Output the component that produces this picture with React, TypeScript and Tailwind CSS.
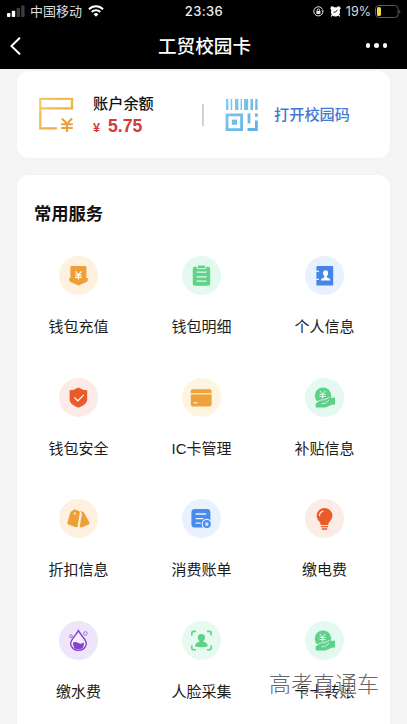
import React from "react";

type Service = {
  label: string;
  bg: string;
  icon: React.ReactNode;
};

function Yen({ x, y, s = 1, color = "#fff", w = 1.2 }: { x: number; y: number; s?: number; color?: string; w?: number }) {
  return (
    <path
      transform={`translate(${x} ${y}) scale(${s})`}
      d="M-3 -4L0 -0.6L3 -4M0 -0.6V4.2M-3.2 -0.2H3.2M-3.2 2H3.2"
      fill="none"
      stroke={color}
      strokeWidth={w}
    />
  );
}

function HandCoin() {
  return (
    <>
      <circle cx="18" cy="17.6" r="8.2" fill="#5fd08a" />
      <Yen x={17.6} y={16.6} s={0.95} w={1} color="#e4f9ef" />
      <path
        d="M10.7 25.2L14 23.4C15.8 22.4 17.5 22.6 19 22.4L24.5 20L30 19.6V26.4L26.8 26.8L20.5 29.4L10.7 29.6Z"
        fill="#5fd08a"
      />
      <path d="M10.7 24.6L14 22.8C15.8 21.8 17.5 22 19 21.8L24.5 19.4" fill="none" stroke="#e4f9ef" strokeWidth=".8" />
      <path d="M16.5 25.8L20.4 25.2L24 22.2" fill="none" stroke="#e4f9ef" strokeWidth=".8" />
    </>
  );
}

const services: Service[] = [
  {
    label: "钱包充值",
    bg: "bg-[#fef1e0]",
    icon: (
      <>
        <path
          d="M12.6 10H26.2Q27.4 10 27.4 11.2V22L29 22.6L28.4 25.4L19.5 29.6L10.6 25.4L10 22.6L11.4 22V11.2Q11.4 10 12.6 10Z"
          fill="#ee9f38"
        />
        <Yen x={19.4} y={19.4} />
      </>
    ),
  },
  {
    label: "钱包明细",
    bg: "bg-[#e4f9ef]",
    icon: (
      <>
        <rect x="10.8" y="10.8" width="17.4" height="19" rx="2.2" fill="#5fd488" />
        <path d="M16 9.6H23V12.2H16Z" fill="#5fd488" />
        <path d="M15.2 10.2V12.6H23.8V10.2" fill="none" stroke="#e4f9ef" strokeWidth=".9" />
        <path d="M14.6 16.2H24.6M14.6 20.8H24.6M14.6 25.2H24.6" stroke="#e4f9ef" strokeWidth="1.2" />
      </>
    ),
  },
  {
    label: "个人信息",
    bg: "bg-[#e8f2fe]",
    icon: (
      <>
        <rect x="11.4" y="10" width="16.8" height="19.6" rx="1.2" fill="#4585e6" />
        <path d="M10.4 15.4H14M10.4 23.4H14" stroke="#e8f2fe" strokeWidth="1.3" />
        <ellipse cx="20.6" cy="17.2" rx="2.5" ry="2.9" fill="#fff" />
        <path d="M15.8 24.4Q16 22 19.4 21.4V19H21.8V21.4Q25.2 22 25.4 24.4Z" fill="#fff" />
      </>
    ),
  },
  {
    label: "钱包安全",
    bg: "bg-[#fcebe7]",
    icon: (
      <>
        <path
          d="M19.4 9.4Q23.5 12 28.2 12.2V22Q28 26.4 19.4 29.8Q10.8 26.4 10.6 22V12.2Q15.3 12 19.4 9.4Z"
          fill="#ea5a2a"
        />
        <path d="M15.2 19.4L18.8 22.8L24.8 16.8" fill="none" stroke="#fff" strokeWidth="1.2" />
      </>
    ),
  },
  {
    label: "IC卡管理",
    bg: "bg-[#fef4e0]",
    icon: (
      <>
        <rect x="8.8" y="11.2" width="20.8" height="17.2" rx="1.8" fill="#f0a23a" />
        <path d="M8.8 15.8H29.6" stroke="#fff3dc" strokeWidth="1.2" />
        <path d="M11.6 24.8H15.4" stroke="#fff3dc" strokeWidth="1.3" />
      </>
    ),
  },
  { label: "补贴信息", bg: "bg-[#e4f9ef]", icon: <HandCoin /> },
  {
    label: "折扣信息",
    bg: "bg-[#fef1e0]",
    icon: (
      <>
        <path
          d="M15.6 10.2L19.8 12Q21 12.6 20.8 14L18.6 27.2Q18.3 28.6 17 28.2L9.4 25.6Q8 25.2 8.4 23.8L11.2 14Q11.4 13.2 12.2 12.6Z"
          fill="#ee9f38"
        />
        <circle cx="15.8" cy="14.6" r="1.1" fill="#fef1e0" />
        <path
          d="M21.2 11.2L24.8 13.6Q25.6 14.2 26 15.2L30.4 23.6Q31 24.8 29.8 25.4L22.4 28.4Q20.6 28.8 20.8 27L22.8 15.4Q22.8 13.8 21.2 11.2Z"
          fill="#ee9f38"
        />
      </>
    ),
  },
  {
    label: "消费账单",
    bg: "bg-[#e8f2fe]",
    icon: (
      <>
        <rect x="9.4" y="10" width="19" height="18.6" rx="3.4" fill="#4a8aec" />
        <path d="M13.6 15H24.2M13.6 19.6H21.4M13.6 24.2H18.6" stroke="#e8f2fe" strokeWidth="1.3" />
        <circle cx="24.8" cy="25" r="4.6" fill="#4a8aec" stroke="#e8f2fe" strokeWidth="1.2" />
        <Yen x={24.8} y={25} s={0.5} w={1.7} />
      </>
    ),
  },
  {
    label: "缴电费",
    bg: "bg-[#fcece6]",
    icon: (
      <>
        <path
          d="M19.5 9A7.8 7.8 0 0 1 27.4 16.8C27.4 20.6 23.6 22.6 23.2 26H15.8C15.4 22.6 11.6 20.6 11.6 16.8A7.8 7.8 0 0 1 19.5 9Z"
          fill="#ea5a2a"
        />
        <path d="M15.9 27.6H23.1M16.8 30H22.2" stroke="#ea5a2a" strokeWidth="1.4" />
        <path d="M14.4 17Q14.6 13 18.4 12.2" fill="none" stroke="#fcece6" strokeWidth="1.3" />
      </>
    ),
  },
  {
    label: "缴水费",
    bg: "bg-[#efe5fb]",
    icon: (
      <>
        <path
          d="M19.4 9.6C22 14.6 27.4 18.4 27.4 23A8 7.6 0 0 1 11.6 23C11.6 18.4 16.8 14.6 19.4 9.6Z"
          fill="#f5effd"
          stroke="#8540cc"
          strokeWidth="1.4"
        />
        <path d="M14 21.4Q16.6 20.2 19.4 22Q22 23.6 25 21.6Q25.6 28.2 19.5 28.4Q13.6 28.2 14 21.4Z" fill="#8540cc" />
        <circle cx="12" cy="15.2" r="1.4" fill="none" stroke="#9b62d6" strokeWidth=".9" />
        <circle cx="26.4" cy="12.4" r="1.8" fill="none" stroke="#9b62d6" strokeWidth=".9" />
      </>
    ),
  },
  {
    label: "人脸采集",
    bg: "bg-[#e6faf0]",
    icon: (
      <>
        <path
          d="M9.8 14.6V12.4Q9.8 10.4 11.8 10.4H14M25 10.4H27.2Q29.2 10.4 29.2 12.4V14.6M29.2 24.6V26.8Q29.2 28.8 27.2 28.8H25M14 28.8H11.8Q9.8 28.8 9.8 26.8V24.6"
          fill="none"
          stroke="#5fd088"
          strokeWidth="1.6"
        />
        <circle cx="19.4" cy="16.6" r="3.6" fill="#5fd088" />
        <path d="M17.6 18.6H21.2V20.6Q25.6 21.6 25.8 25.2Q19.4 27.2 13 25.2Q13.2 21.6 17.6 20.6Z" fill="#5fd088" />
      </>
    ),
  },
  { label: "卡卡转账", bg: "bg-[#e4f9ef]", icon: <HandCoin /> },
];

function StatusBar() {
  return (
    <div className="grid h-[22px] grid-cols-3 items-center pl-[7px] pr-[6px] text-[13px] leading-none text-[#dedede]">
      <div className="flex items-center">
        <svg width="18" height="12" viewBox="0 0 18 12">
          <rect x="0" y="8" width="3.4" height="4" rx=".8" fill="#fff" />
          <rect x="4.8" y="5.8" width="3.4" height="6.2" rx=".8" fill="#fff" />
          <rect x="9.6" y="3" width="3.4" height="9" rx=".8" fill="#3c3c3c" />
          <rect x="14.2" y="0.6" width="3.4" height="11.4" rx=".8" fill="#3c3c3c" />
        </svg>
        <span className="ml-[5px] whitespace-nowrap">中国移动</span>
        <svg className="ml-[6px]" width="16" height="12" viewBox="0 0 16 12">
          <path d="M1 4.2A10 10 0 0 1 15 4.2" fill="none" stroke="#fff" strokeWidth="2" />
          <path d="M3.7 7A6.2 6.2 0 0 1 12.3 7" fill="none" stroke="#fff" strokeWidth="1.9" />
          <path d="M5.6 9.2A3.5 3.5 0 0 1 10.4 9.2L8 11.8Z" fill="#fff" />
        </svg>
      </div>
      <span className="text-center font-[Inter] text-[13px] font-medium tracking-[0.4px] text-[#eeeeee]">23:36</span>
      <div className="flex items-center justify-end">
        <svg width="11" height="11" viewBox="0 0 11 11" fill="none" stroke="#e6e6e6">
          <path d="M9.9 6.2A4.6 4.6 0 1 1 9.6 3.5" strokeWidth="1" />
          <path d="M8.1 4.6H10.8L9.9 6.4Z" fill="#e6e6e6" stroke="none" />
          <rect x="3.4" y="5" width="4" height="3" fill="#e6e6e6" stroke="none" />
          <path d="M4.2 5V4.1A1.2 1.2 0 0 1 6.6 4.1V5" strokeWidth=".9" />
        </svg>
        <svg className="ml-[6px]" width="11" height="11" viewBox="0 0 11 11">
          <circle cx="2.4" cy="2.2" r="1.9" fill="#fff" />
          <circle cx="8.6" cy="2.2" r="1.9" fill="#fff" />
          <circle cx="5.5" cy="5.9" r="4.6" fill="#fff" />
          <path d="M2 9L1.2 10.6M9 9L9.8 10.6" stroke="#fff" strokeWidth="1.2" />
          <path d="M7.4 3.8L5.5 6.1H3.4" stroke="#111" fill="none" strokeWidth=".9" />
        </svg>
        <span className="mt-[2px] ml-[5px] font-[Inter] text-[12.5px]">19%</span>
        <svg className="ml-[4px]" width="26" height="13" viewBox="0 0 26 13">
          <rect x=".5" y=".5" width="22.6" height="12" rx="3.4" fill="none" stroke="#5c5c5c" />
          <rect x="2" y="2" width="4" height="9" rx="1.6" fill="#f3d84a" />
          <path d="M24.4 4.4Q26 6.5 24.4 8.6Z" fill="#777" />
        </svg>
      </div>
    </div>
  );
}

function NavBar() {
  return (
    <div className="grid h-[47px] grid-cols-[1fr_auto_1fr] items-center pl-[10px] pr-[20px]">
      <svg width="11" height="18" viewBox="0 0 11 18">
        <path d="M9.4 1.2L1.4 9L9.4 16.8" fill="none" stroke="#fff" strokeWidth="2" strokeLinecap="round" />
      </svg>
      <h1 className="ml-[10px] -mr-[2px] pt-[3px] text-[18.6px] leading-none font-medium text-white">工贸校园卡</h1>
      <div className="flex justify-end gap-1">
        <i className="size-[4.5px] rounded-full bg-white" />
        <i className="size-[4.5px] rounded-full bg-white" />
        <i className="size-[4.5px] rounded-full bg-white" />
      </div>
    </div>
  );
}

function BalanceCard() {
  return (
    <section className="flex h-[87px] items-center rounded-xl bg-white pl-[21px] shadow-[0_0_3px_rgba(0,0,0,0.03)]">
      <svg width="36" height="36" viewBox="0 0 36 36" fill="none">
        <defs>
          <linearGradient id="gold" x1="0" y1="0" x2="36" y2="36" gradientUnits="userSpaceOnUse">
            <stop offset="0" stopColor="#f7cf63" />
            <stop offset="1" stopColor="#ee9a2c" />
          </linearGradient>
        </defs>
        <path d="M18.8 31.3H2.3V1.8H34V11.4H2.3" stroke="url(#gold)" strokeWidth="2.3" />
        <path d="M24 21.6L29 26.8L34 21.6M29 26.8V35M23.2 27.2H34.8M23.2 31H34.8" stroke="#eda03a" strokeWidth="2.1" />
      </svg>
      <div className="ml-[19px] w-[109px] pt-[3px]">
        <div className="text-[15.2px] leading-[20px] font-medium text-[#111]">账户余额</div>
        <div className="flex items-baseline pt-px font-['Liberation_Sans'] font-bold leading-[22px] text-[#d23a3c]">
          <span className="w-[15px] text-[12.5px]">¥</span>
          <span className="text-[17.6px]">5.75</span>
        </div>
      </div>
      <div className="h-[22px] w-[2px] bg-[#d2d2d2]" />
      <svg className="ml-[21px]" width="34" height="34" viewBox="0 0 34 34" fill="none">
        <defs>
          <linearGradient id="sky" x1="0" y1="0" x2="34" y2="34" gradientUnits="userSpaceOnUse">
            <stop offset="0" stopColor="#86ccf0" />
            <stop offset="1" stopColor="#5fadE2" />
          </linearGradient>
        </defs>
        <g fill="url(#sky)">
          <rect x="1" y="1" width="2.4" height="11" />
          <rect x="5.6" y="1" width="1.6" height="11" />
          <rect x="10" y="1" width="3.4" height="11" />
          <rect x="15.6" y="1" width="1.4" height="11" />
          <rect x="19" y="1" width="4.2" height="11" />
          <rect x="25.4" y="1" width="2.6" height="11" />
          <rect x="30.2" y="1" width="2.4" height="11" />
          <path fillRule="evenodd" d="M0.6 15.4H18V33H0.6ZM3.4 18.2V30.2H15.2V18.2Z" />
          <rect x="6.8" y="21.6" width="5.2" height="5.2" />
          <rect x="22.6" y="15.4" width="2.8" height="10" />
          <rect x="30" y="15.4" width="2.8" height="3.4" />
          <path d="M30 22.6H32.8V33H22.6V30H30Z" />
        </g>
      </svg>
      <span className="ml-[15px] pt-px text-[15.2px] leading-none font-medium text-[#4478d2]">打开校园码</span>
    </section>
  );
}

function App() {
  return (
    <div className="relative h-[724px] w-[407px] overflow-hidden bg-[#f5f5f5] font-['Liberation_Sans','Noto_Sans_CJK_SC',sans-serif]">
      <header className="bg-black">
        <StatusBar />
        <NavBar />
      </header>
      <main className="flex flex-col gap-[17px] pt-[2px] pr-[17px] pl-[17px]">
        <BalanceCard />
        <section className="h-[570px] rounded-xl bg-white pt-[29px] pr-[4px] shadow-[0_0_3px_rgba(0,0,0,0.03)]">
          <h2 className="pl-[17px] text-[17.3px] leading-[20px] font-bold text-[#111]">常用服务</h2>
          <div className="mt-[32px] grid grid-cols-3">
            {services.map((item) => (
              <div key={item.label} className="flex h-[121.5px] flex-col items-center">
                <div className={`size-[39px] rounded-full ${item.bg}`}>
                  <svg width="39" height="39" viewBox="0 0 39 39">
                    {item.icon}
                  </svg>
                </div>
                <span className="mt-[22px] text-[15px] leading-[20px] text-[#1c1c1c]">{item.label}</span>
              </div>
            ))}
          </div>
        </section>
      </main>
      <div className="absolute top-[672px] left-[269px] text-[22px] leading-[26px] font-light whitespace-nowrap text-[#666] [text-shadow:1px_1px_0_#fff]">
        高考直通车
      </div>
    </div>
  );
}

export default App;
